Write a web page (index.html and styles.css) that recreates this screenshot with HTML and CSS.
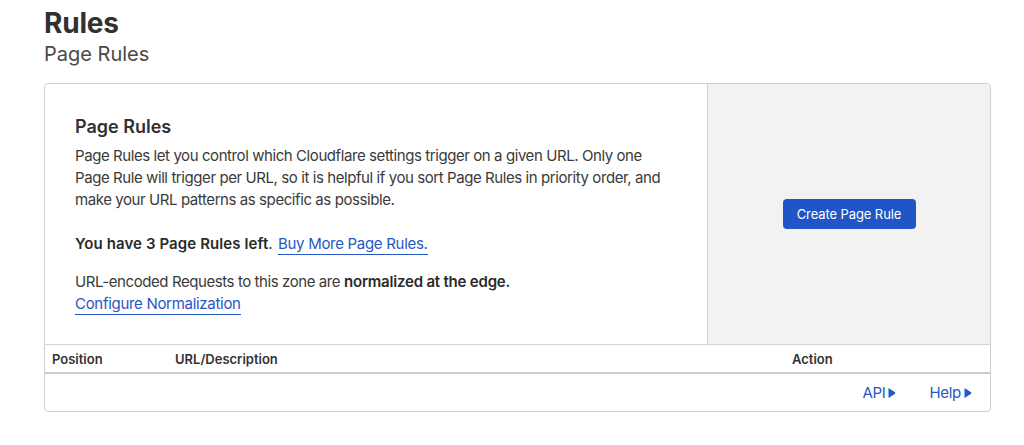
FILE: index.html
```html
<!DOCTYPE html>
<html lang="en">
<head>
<meta charset="utf-8">
<title>Rules - Page Rules</title>
<link rel="stylesheet" href="styles.css">
</head>
<body>
<div class="page">
  <header class="page-header">
    <h1 class="page-title">Rules</h1>
    <h2 class="page-subtitle">Page Rules</h2>
  </header>

  <section class="card">
    <div class="card-top">
      <div class="card-body">
        <h3 class="card-title">Page Rules</h3>
        <p class="card-text card-intro">Page Rules let you control which Cloudflare settings trigger on a given URL. Only one Page Rule will trigger per URL, so it is helpful if you sort Page Rules in priority order, and make your URL patterns as specific as possible.</p>
        <p class="card-text"><strong class="wide">You have 3 Page Rules left</strong>. <a class="link link-buy" href="#">Buy More Page Rules.</a></p>
        <p class="card-text">URL-encoded Requests to this zone are <strong>normalized at the edge.</strong><br><a class="link" href="#">Configure Normalization</a></p>
      </div>
      <div class="card-aside">
        <button class="btn-primary" type="button">Create Page Rule</button>
      </div>
    </div>

    <div class="table-head">
      <div class="col col-pos">Position</div>
      <div class="col col-url">URL/Description</div>
      <div class="col col-action">Action</div>
    </div>

    <div class="card-footer">
      <a class="footer-link" href="#">API<svg class="caret" viewBox="0 0 8 12" width="8" height="12" aria-hidden="true"><path d="M1 1.2 L7 5.3 Q7.8 6 7 6.7 L1 10.8 Q0.5 11.1 0.5 10.4 V1.6 Q0.5 0.9 1 1.2 Z" fill="#2757c4"/></svg></a>
      <a class="footer-link" href="#">Help<svg class="caret" viewBox="0 0 8 12" width="8" height="12" aria-hidden="true"><path d="M1 1.2 L7 5.3 Q7.8 6 7 6.7 L1 10.8 Q0.5 11.1 0.5 10.4 V1.6 Q0.5 0.9 1 1.2 Z" fill="#2757c4"/></svg></a>
    </div>
  </section>
</div>
</body>
</html>
```

FILE: styles.css
```css
* { box-sizing: border-box; }

body {
  margin: 0;
  background: #ffffff;
  font-family: Inter, "Noto Sans", "Liberation Sans", sans-serif;
  color: #313131;
}

.page {
  padding: 6px 33px 0 44px;
}

.page-title {
  margin: 0;
  font-size: 28px;
  line-height: 34px;
  font-weight: 700;
  color: #313131;
  letter-spacing: -0.2px;
}

.page-subtitle {
  margin: 0;
  font-size: 20px;
  line-height: 28px;
  font-weight: 400;
  color: #4a4a4a;
}

.card {
  margin-top: 15px;
  width: 947px;
  border: 1px solid #cfcfcf;
  border-radius: 4px;
  overflow: hidden;
}

.card-top {
  display: flex;
  height: 260px;
}

.card-body {
  flex: 1;
  padding: 31px 40px 0 30px;
}

.card-title {
  margin: 0 0 6px;
  font-size: 18px;
  line-height: 24px;
  font-weight: 600;
  color: #313131;
}

.card-text {
  margin: 0 0 16px;
  font-size: 15px;
  line-height: 22px;
  color: #3a3a3a;
  letter-spacing: -0.42px;
}

.card-intro {
  margin-bottom: 22px;
}

.card-text strong {
  font-weight: 600;
  color: #2a2a2a;
  letter-spacing: -0.2px;
}

.card-text strong.wide {
  letter-spacing: 0.1px;
}

.link {
  color: #2757c4;
  text-decoration: none;
  border-bottom: 1px solid #2757c4;
  padding-bottom: 1px;
  letter-spacing: -0.3px;
}

.link-buy {
  margin-left: 2px;
}

.card-aside {
  width: 283px;
  background: #f2f2f2;
  border-left: 1px solid #cfcfcf;
  display: flex;
  align-items: center;
  justify-content: center;
}

.btn-primary {
  font-family: inherit;
  font-size: 13px;
  line-height: 16px;
  color: #ffffff;
  background: #1f55c6;
  border: none;
  border-radius: 4px;
  padding: 0;
  width: 133px;
  height: 30px;
  white-space: nowrap;
  letter-spacing: -0.1px;
}

.table-head {
  display: flex;
  height: 30px;
  align-items: center;
  border-top: 1px solid #d6d6d6;
  border-bottom: 2px solid #cccccc;
  font-size: 13px;
  font-weight: 600;
  color: #333333;
}

.col-pos { width: 130px; padding-left: 7px; }
.col-url { width: 617px; }

.card-footer {
  display: flex;
  justify-content: flex-end;
  align-items: center;
  gap: 33px;
  height: 37px;
  padding-right: 18px;
}

.footer-link {
  display: inline-flex;
  align-items: center;
  font-size: 15px;
  color: #2757c4;
  text-decoration: none;
  letter-spacing: -0.3px;
}

.caret {
  display: block;
  margin-left: 3px;
}
```
